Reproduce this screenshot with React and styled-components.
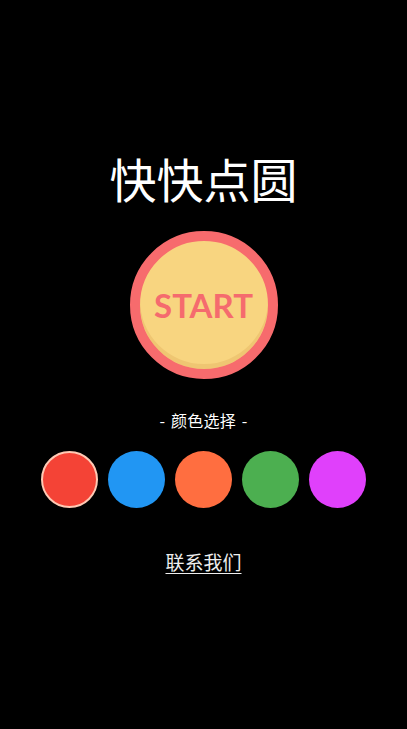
import React, { useState } from "react";
import styled, { createGlobalStyle } from "styled-components";

const Global = createGlobalStyle`
  html, body { margin: 0; padding: 0; background: #000; }
  body { font-family: "Noto Sans", "Noto Sans CJK SC", sans-serif; }
`;

const Page = styled.div`
  width: 407px;
  height: 729px;
  background: #000;
  display: flex;
  flex-direction: column;
  align-items: center;
  padding-top: 150px;
  box-sizing: border-box;
`;

const Title = styled.h1`
  margin: 0;
  font-family: "Noto Sans CJK SC", sans-serif;
  font-weight: 400;
  font-size: 47px;
  line-height: 56px;
  color: #fff;
`;

const StartButton = styled.button`
  margin-top: 25px;
  width: 148px;
  height: 148px;
  border-radius: 50%;
  border: 10px solid #f76b6d;
  background: #f8d580;
  box-shadow: inset 0 -5px 0 #efc672;
  box-sizing: border-box;
  display: flex;
  align-items: center;
  justify-content: center;
  padding: 0;
  cursor: pointer;
  font-family: "Lato", "Noto Sans", sans-serif;
  font-weight: 700;
  font-size: 33px;
  letter-spacing: 0;
  color: #f56b6e;
`;

const Label = styled.div`
  margin-top: 31px;
  font-family: "Noto Sans CJK SC", sans-serif;
  font-size: 16px;
  line-height: 20px;
  letter-spacing: 0.2px;
  word-spacing: 2px;
  color: #fff;
`;

const Swatches = styled.div`
  margin-top: 21px;
  display: flex;
  gap: 10px;
`;

const Swatch = styled.div`
  width: 57px;
  height: 57px;
  border-radius: 50%;
  background: ${(p) => p.$color};
  box-sizing: border-box;
  border: ${(p) => (p.$active ? "2px solid #ffc9b4" : "none")};
  cursor: pointer;
`;

const Link = styled.a`
  margin-top: 42px;
  font-family: "Noto Sans CJK SC", sans-serif;
  font-size: 19px;
  line-height: 24px;
  color: #eee;
  text-decoration: underline;
  text-underline-offset: 3px;
  cursor: pointer;
`;

const colors = ["#f44336", "#2196f3", "#ff6e40", "#4caf50", "#e040fb"];

export default function App() {
  const [active, setActive] = useState(0);
  return (
    <>
      <Global />
      <Page>
        <Title>快快点圆</Title>
        <StartButton>START</StartButton>
        <Label>- 颜色选择 -</Label>
        <Swatches>
          {colors.map((c, i) => (
            <Swatch key={c} $color={c} $active={i === active} onClick={() => setActive(i)} />
          ))}
        </Swatches>
        <Link>联系我们</Link>
      </Page>
    </>
  );
}
